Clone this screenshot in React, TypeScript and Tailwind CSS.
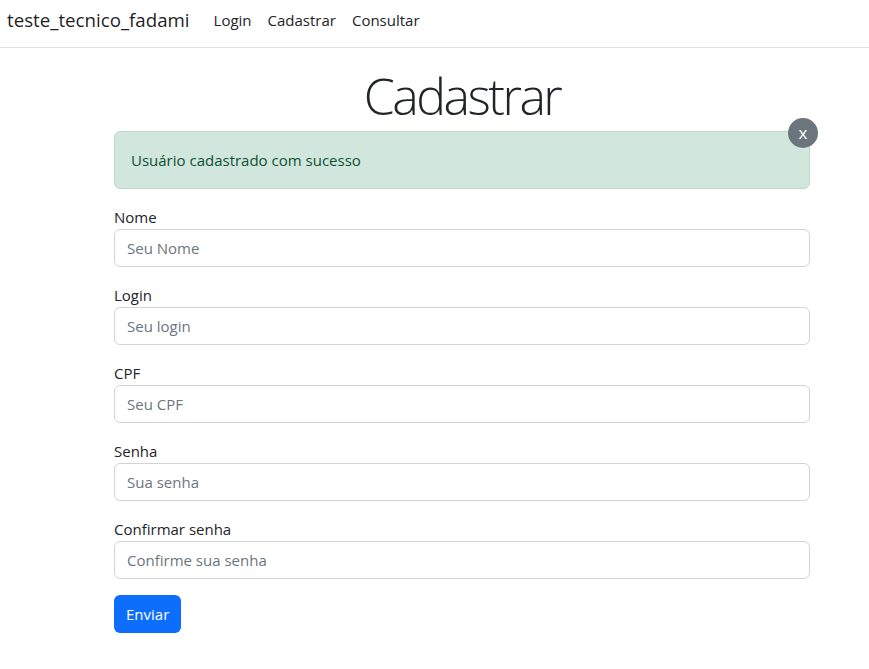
import { useState } from "react";

const fields = [
  { label: "Nome", placeholder: "Seu Nome", type: "text" },
  { label: "Login", placeholder: "Seu login", type: "text" },
  { label: "CPF", placeholder: "Seu CPF", type: "text" },
  { label: "Senha", placeholder: "Sua senha", type: "password" },
  { label: "Confirmar senha", placeholder: "Confirme sua senha", type: "password" },
];

export default function App() {
  const [showAlert, setShowAlert] = useState(true);

  return (
    <div className="min-h-screen bg-white text-[#212529] font-['Open_Sans',sans-serif] text-[15px] leading-6">
      {/* Navbar */}
      <nav className="flex h-12 items-center border-b border-[#dee2e6] px-[7px] pb-2">
        <a href="#" className="mr-4 text-[18.7px] leading-[30px] text-black/90">
          teste_tecnico_fadami
        </a>
        <ul className="flex items-center">
          {["Login", "Cadastrar", "Consultar"].map((item) => (
            <li key={item}>
              <a href="#" className="px-2 py-2 text-[#212529]">
                {item}
              </a>
            </li>
          ))}
        </ul>
      </nav>

      {/* Content */}
      <main className="ml-[114px] w-[696px]">
        <h1 className="mt-[13px] text-center text-[50px] font-light leading-[70px] tracking-[-2.5px]">
          Cadastrar
        </h1>

        {showAlert && (
          <div className="relative mb-4 rounded-md border border-[#badbcc] bg-[#d1e7dd] px-4 py-4 text-[#0f5132]">
            Usuário cadastrado com sucesso
            <button
              onClick={() => setShowAlert(false)}
              className="absolute -top-[14px] -right-[9px] flex h-[30px] w-[30px] items-center justify-center rounded-full bg-[#6c757d] pb-[2px] text-[17px] leading-none text-white"
            >
              x
            </button>
          </div>
        )}

        <form onSubmit={(e) => e.preventDefault()}>
          {fields.map((f) => (
            <div key={f.label} className="mb-4">
              <label className="block leading-6">{f.label}</label>
              <input
                type={f.type}
                placeholder={f.placeholder}
                className="block h-[38px] w-full rounded-md border border-[#ced4da] px-3 text-[15px] placeholder:text-[#6c757d] focus:outline-none"
              />
            </div>
          ))}
          <button
            type="submit"
            className="h-[38px] rounded-md bg-[#0d6efd] px-3 text-white"
          >
            Enviar
          </button>
        </form>
      </main>
    </div>
  );
}
